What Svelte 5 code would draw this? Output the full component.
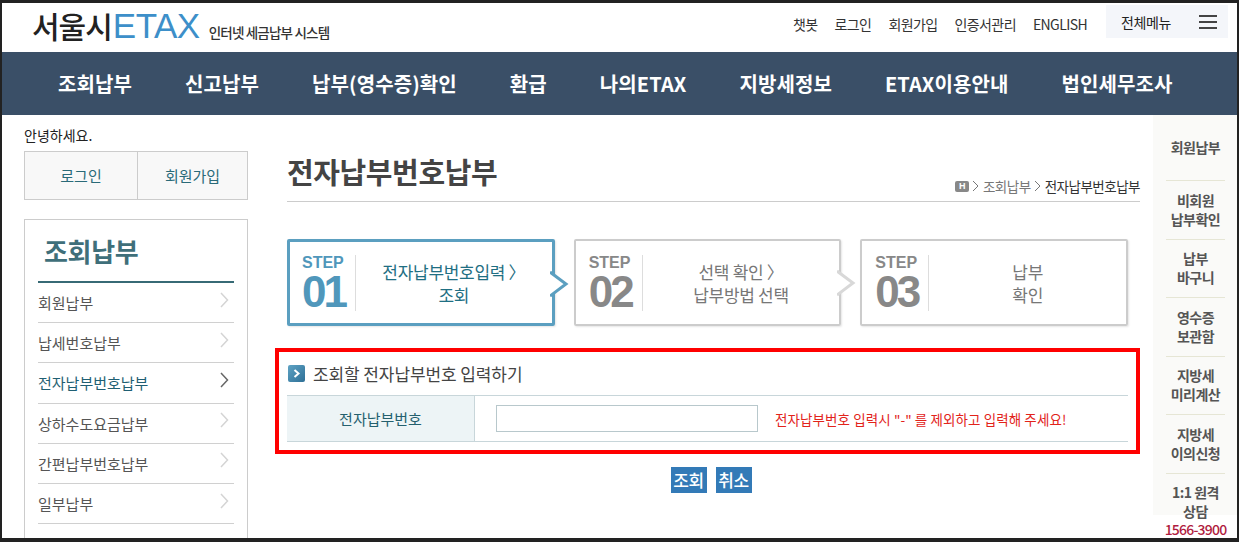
<script lang="ts">
  const utilLinks = ['챗봇', '로그인', '회원가입', '인증서관리', 'ENGLISH'];
  const navItems = ['조회납부', '신고납부', '납부(영수증)확인', '환급', '나의ETAX', '지방세정보', 'ETAX이용안내', '법인세무조사'];
  const sideItems = ['회원납부', '납세번호납부', '전자납부번호납부', '상하수도요금납부', '간편납부번호납부', '일부납부'];
  const activeSide = '전자납부번호납부';
  const steps = [
    { no: '01', lines: ['전자납부번호입력 〉', '조회'], on: true },
    { no: '02', lines: ['선택 확인 〉', '납부방법 선택'], on: false },
    { no: '03', lines: ['납부', '확인'], on: false }
  ];
  const railItems = [
    ['회원납부'],
    ['비회원', '납부확인'],
    ['납부', '바구니'],
    ['영수증', '보관함'],
    ['지방세', '미리계산'],
    ['지방세', '이의신청'],
    ['1:1 원격', '상담']
  ];
</script>

<div class="frame">
  <header class="top">
    <div class="logo">
      <span class="logo-city">서울시</span>
      <span class="logo-etax">ETAX</span>
      <span class="logo-sub">인터넷 세금납부 시스템</span>
    </div>
    <nav class="util">
      {#each utilLinks as link}
        <span>{link}</span>
      {/each}
    </nav>
    <div class="all-menu">
      <span>전체메뉴</span>
      <svg width="18" height="14" viewBox="0 0 18 14"><path d="M0 1h18M0 7h18M0 13h18" stroke="#444" stroke-width="2" /></svg>
    </div>
  </header>

  <nav class="gnb">
    {#each navItems as item}
      <span>{item}</span>
    {/each}
  </nav>

  <div class="body">
    <aside class="side">
      <p class="hello">안녕하세요.</p>
      <div class="auth">
        <span>로그인</span>
        <span>회원가입</span>
      </div>
      <div class="side-menu">
        <h2>조회납부</h2>
        <ul>
          {#each sideItems as item}
            <li class:active={item === activeSide}>
              <span>{item}</span>
              <svg width="9" height="16" viewBox="0 0 9 16"><path d="M1 1l6.5 7L1 15" fill="none" stroke={item === activeSide ? '#666' : '#d4d4d4'} stroke-width="1.5" /></svg>
            </li>
          {/each}
        </ul>
      </div>
    </aside>

    <main class="main">
      <div class="page-head">
        <h1>전자납부번호납부</h1>
        <div class="crumb">
          <i>H</i>
          <svg width="8" height="12" viewBox="0 0 8 12"><path d="M1 1l5 5-5 5" fill="none" stroke="#777" /></svg>
          <span>조회납부</span>
          <svg width="8" height="12" viewBox="0 0 8 12"><path d="M1 1l5 5-5 5" fill="none" stroke="#777" /></svg>
          <b>전자납부번호납부</b>
        </div>
      </div>

      <div class="steps">
        {#each steps as step, i}
          <div class="step" class:on={step.on}>
            <div class="step-no">
              <small>STEP</small>
              <strong>{step.no}</strong>
            </div>
            <div class="step-text">
              {#each step.lines as line}
                <span>{line}</span>
              {/each}
            </div>
            {#if i < 2}
              <svg class="step-arrow" width="20" height="26" viewBox="0 0 20 26">
                <path d="M0 1l16 12L0 25" fill="#fff" stroke={step.on ? '#5b9fc0' : '#d8d8d8'} stroke-width="3" />
              </svg>
            {/if}
          </div>
        {/each}
      </div>

      <section class="form-box">
        <h3>
          <svg width="17" height="18" viewBox="0 0 17 18">
            <defs>
              <linearGradient id="bullet" x1="0" y1="0" x2="1" y2="1">
                <stop offset="0" stop-color="#5fa3c4" />
                <stop offset="1" stop-color="#2d6f96" />
              </linearGradient>
            </defs>
            <rect width="17" height="17" rx="2" fill="url(#bullet)" />
            <path d="M6.5 5l4 3.5-4 3.5" fill="none" stroke="#fff" stroke-width="2" />
          </svg>
          조회할 전자납부번호 입력하기
        </h3>
        <div class="form-row">
          <label for="epay">전자납부번호</label>
          <div class="form-cell">
            <input id="epay" type="text" />
            <span class="notice">전자납부번호 입력시 "-" 를 제외하고 입력해 주세요!</span>
          </div>
        </div>
      </section>

      <div class="actions">
        <button>조회</button>
        <button>취소</button>
      </div>
    </main>

    <aside class="rail">
      <div class="rail-list">
        {#each railItems as lines}
          <div class="rail-item">
            {#each lines as line}
              <span>{line}</span>
            {/each}
          </div>
        {/each}
      </div>
      <p class="phone">1566-3900</p>
    </aside>
  </div>
</div>

<style>
  :global(body) {
    margin: 0;
    background: #fff;
  }

  .frame {
    box-sizing: border-box;
    width: 1239px;
    height: 542px;
    overflow: hidden;
    border: 2px solid #222;
    border-top-width: 3px;
    border-bottom-width: 4px;
    font-family: "Noto Sans CJK KR", "Noto Sans", sans-serif;
    color: #444;
  }

  .top {
    display: flex;
    align-items: flex-start;
    height: 49px;
    padding-left: 30px;
  }

  .logo {
    display: flex;
    align-items: baseline;
    margin-top: 1px;
    color: #222;
  }

  .logo-city {
    font-size: 30px;
    font-weight: 500;
    line-height: 42px;
    letter-spacing: -1px;
  }

  .logo-etax {
    margin-left: 1px;
    font-family: "Liberation Sans", sans-serif;
    font-size: 35px;
    line-height: 42px;
    color: #3d8fc9;
    letter-spacing: -0.5px;
  }

  .logo-sub {
    margin-left: 9px;
    font-size: 13.5px;
    font-weight: 500;
    letter-spacing: -0.8px;
    color: #333;
  }

  .util {
    display: flex;
    gap: 17px;
    margin-left: auto;
    margin-top: 11px;
    font-size: 14px;
    line-height: 20px;
    letter-spacing: -0.6px;
    color: #333;
  }

  .all-menu {
    display: flex;
    align-items: center;
    justify-content: space-between;
    box-sizing: border-box;
    width: 122px;
    height: 33px;
    margin: 2px 9px 0 19px;
    padding: 0 11px 0 15px;
    background: #f4f6fa;
    font-size: 14px;
    letter-spacing: -0.4px;
    color: #222;
  }

  .gnb {
    display: flex;
    align-items: center;
    gap: 53px;
    height: 63px;
    padding-left: 56px;
    background: #3a4f67;
    font-size: 20px;
    font-weight: 700;
    letter-spacing: 0.1px;
    color: #fff;
    white-space: nowrap;
  }

  .body {
    display: flex;
    align-items: flex-start;
    height: 422px;
    padding-left: 22px;
  }

  .side {
    flex: 0 0 224px;
  }

  .hello {
    margin: 10px 0 5px;
    font-size: 14px;
    line-height: 21px;
    color: #222;
  }

  .auth {
    display: grid;
    grid-template-columns: 112px 1fr;
    box-sizing: border-box;
    height: 49px;
    border: 1px solid #ccc;
    background: #f8f8f8;
    font-size: 15px;
    color: #2a6a78;
  }

  .auth span {
    display: flex;
    align-items: center;
    justify-content: center;
  }

  .auth span + span {
    border-left: 1px solid #ccc;
  }

  .side-menu {
    box-sizing: border-box;
    height: 340px;
    margin-top: 19px;
    padding: 0 13px;
    border: 1px solid #ccc;
  }

  .side-menu h2 {
    height: 61px;
    margin: 0;
    padding: 13px 0 0 6px;
    box-sizing: border-box;
    border-bottom: 2px solid #376a75;
    font-size: 26px;
    font-weight: 700;
    line-height: 36px;
    letter-spacing: -0.3px;
    color: #3f6f7a;
    height: 63px;
  }

  .side-menu ul {
    margin: 0;
    padding: 0;
    list-style: none;
  }

  .side-menu li {
    display: flex;
    align-items: center;
    justify-content: space-between;
    box-sizing: border-box;
    height: 40.2px;
    padding-right: 5px;
    border-bottom: 1px solid #d0d0d0;
    font-size: 15px;
    color: #555;
  }

  .side-menu li svg {
    margin-top: -6px;
  }

  .side-menu li.active {
    color: #1f5f73;
  }

  .main {
    flex: 0 0 844px;
    margin-left: 39px;
  }

  .page-head {
    display: flex;
    align-items: flex-end;
    justify-content: space-between;
    box-sizing: border-box;
    height: 87px;
    margin-bottom: 37px;
    border-bottom: 1px solid #ccc;
    padding-bottom: 5px;
  }

  h1 {
    margin: 0 0 5px;
    font-size: 29px;
    font-weight: 700;
    line-height: 40px;
    letter-spacing: -0.4px;
    color: #444;
  }

  .crumb {
    display: flex;
    align-items: center;
    gap: 3px;
    font-size: 13.5px;
    letter-spacing: -0.5px;
    color: #777;
  }

  .crumb i {
    box-sizing: border-box;
    width: 14px;
    height: 11px;
    border-radius: 2px;
    background: #888;
    color: #fff;
    font: 700 9px/11px "Liberation Sans", sans-serif;
    text-align: center;
  }

  .crumb b {
    font-weight: 400;
    color: #333;
  }

  .steps {
    display: flex;
    gap: 19px;
    width: 841px;
  }

  .step {
    position: relative;
    display: flex;
    align-items: center;
    flex: 1 1 265px;
    box-sizing: border-box;
    height: 87px;
    padding-left: 13px;
    border: 2px solid #ccc;
    border-radius: 2px;
    box-shadow: 1px 1px 2px rgba(0, 0, 0, 0.1);
    color: #777;
  }

  .step.on {
    border: 3px solid #5b9fc0;
    padding-left: 12px;
    color: #1f6f83;
  }

  .step-no {
    display: flex;
    flex-direction: column;
    flex: 0 0 53px;
    height: 56px;
    margin-top: 0;
    border-right: 1px solid #ddd;
    font-family: "Liberation Sans", sans-serif;
    font-weight: 700;
    color: #888;
  }

  .step.on .step-no {
    color: #5097bb;
  }

  .step-no small {
    font-size: 16px;
    line-height: 16px;
  }

  .step-no strong {
    font-size: 44px;
    line-height: 42px;
    letter-spacing: -3px;
  }

  .step-text {
    display: flex;
    flex: 1;
    flex-direction: column;
    align-items: center;
    font-size: 17px;
    line-height: 23px;
    letter-spacing: -0.3px;
  }

  .step-arrow {
    position: absolute;
    top: 29px;
    right: -18px;
  }

  .form-box {
    box-sizing: border-box;
    width: 865px;
    height: 106px;
    margin: 22px 0 0 -12px;
    padding: 0 8px;
    border: 4px solid #f00;
  }

  .form-box h3 {
    display: flex;
    align-items: center;
    gap: 8px;
    height: 43px;
    margin: 0;
    padding-left: 1px;
    font-size: 17px;
    font-weight: 400;
    letter-spacing: -0.1px;
    color: #444;
  }

  .form-row {
    display: flex;
    height: 47px;
    box-sizing: border-box;
    border-top: 1px solid #c8d6da;
    border-bottom: 1px solid #c8d6da;
  }

  .form-row label {
    display: flex;
    align-items: center;
    justify-content: center;
    flex: 0 0 187px;
    border-right: 1px solid #c8d6da;
    background: #edf4f6;
    font-size: 15px;
    color: #24606e;
  }

  .form-cell {
    display: flex;
    align-items: center;
    gap: 17px;
    padding-left: 21px;
    white-space: nowrap;
  }

  .form-cell input {
    box-sizing: border-box;
    width: 262px;
    height: 27px;
    margin: 0;
    border: 1px solid #b8c8cc;
    background: #fff;
  }

  .notice {
    font-size: 13.5px;
    letter-spacing: 0.1px;
    color: #e2231a;
  }

  .actions {
    display: flex;
    justify-content: center;
    gap: 9px;
    margin: 13px 0 0 -5px;
  }

  .actions button {
    width: 36px;
    height: 26px;
    padding: 0;
    border: 0;
    background: #337ab7;
    font: 500 17px/26px "Noto Sans CJK KR", sans-serif;
    letter-spacing: -0.5px;
    color: #fff;
  }

  .rail {
    flex: 0 0 85px;
    margin-left: 13px;
    text-align: center;
  }

  .rail-list {
    height: 400px;
    padding: 0 13px;
    background: #fafaf8;
    box-sizing: border-box;
  }

  .rail-item {
    display: flex;
    flex-direction: column;
    align-items: center;
    justify-content: center;
    box-sizing: border-box;
    height: 58.5px;
    margin: 0 0 0;
    border-top: 1px solid #e6e6d5;
    font-size: 14px;
    font-weight: 700;
    line-height: 19px;
    letter-spacing: -0.5px;
    color: #555;
  }

  .rail-item:first-child {
    height: 65px;
    border-top: 0;
  }

  .phone {
    margin: 4px 0 0;
    font-size: 14px;
    font-weight: 500;
    line-height: 20px;
    letter-spacing: -0.8px;
    color: #b01c40;
  }
</style>
